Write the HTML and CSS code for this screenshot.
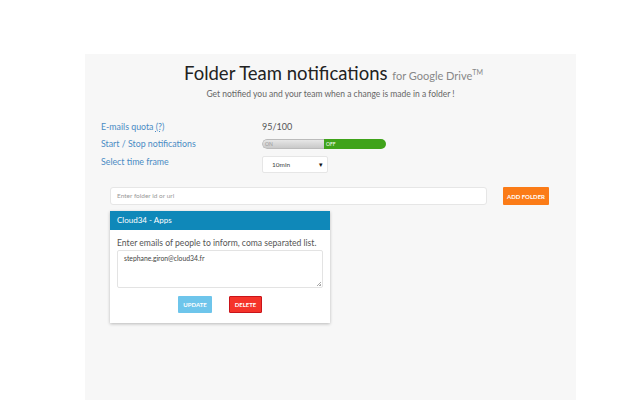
FILE: index.html
```html
<!DOCTYPE html>
<html lang="en">
<head>
    <meta charset="UTF-8">
    <title>Folder Team notifications</title>
    <link rel="stylesheet" href="styles.css">
</head>
<body>
    <div class="wrapper">
        <h1>Folder Team notifications <small>for Google Drive<sup>TM</sup></small></h1>
        <p class="sub">Get notified you and your team when a change is made in a folder !</p>
        <div class="settings">
            <div class="row">
                <span class="label">E-mails quota <u>(?)</u></span>
                <span class="value">95/100</span>
            </div>
            <div class="row">
                <span class="label">Start / Stop notifications</span>
                <div class="toggle"><span class="on">ON</span><span class="off">OFF</span></div>
            </div>
            <div class="row">
                <span class="label">Select time frame</span>
                <div class="select"><span>10min</span><span class="arrow">&#9662;</span></div>
            </div>
        </div>
        <div class="addRow">
            <div class="folderInput">Enter folder id or url</div>
            <button class="btn add">ADD FOLDER</button>
        </div>
        <div class="card">
            <div class="cardHead">Cloud34 - Apps</div>
            <div class="cardBody">
                <p class="hint">Enter emails of people to inform, coma separated list.</p>
                <div class="emails">stephane.giron@cloud34.fr<span class="grip"></span></div>
                <div class="actions">
                    <button class="btn update">UPDATE</button>
                    <button class="btn delete">DELETE</button>
                </div>
            </div>
        </div>
    </div>
</body>
</html>
```

FILE: styles.css
```css
body {
    margin: 0;
    background-color: white;
    font-family: Lato, "Open Sans", sans-serif;
    color: #555;
}
.wrapper {
    width: 491px;
    height: 346px;
    margin: 54px 0 0 85px;
    background-color: #f7f7f7;
    box-sizing: border-box;
    padding-top: 6px;
}
h1 {
    margin: 0;
    text-align: center;
    font-weight: 400;
    font-size: 18.5px;
    color: #222;
    line-height: 24px;
    padding-left: 6px;
}
h1 small {
    font-size: 11px;
    color: #888;
}
h1 sup {
    font-size: 7px;
}
.sub {
    margin: 1px 0 0;
    text-align: center;
    font-size: 8.5px;
    color: #666;
}
.settings {
    margin: 19px 0 0 16px;
}
.row {
    display: flex;
    align-items: center;
    height: 17.5px;
}
.label {
    width: 161px;
    font-size: 8.8px;
    color: #4a8bc4;
}
.label u {
    text-decoration: underline dotted;
}
.value {
    font-size: 9px;
    color: #555;
}
.toggle {
    display: flex;
    width: 124px;
    height: 10px;
    border-radius: 5px;
    overflow: hidden;
    font-size: 5px;
    line-height: 10px;
}
.toggle .on {
    width: 62px;
    padding-left: 2px;
    background: linear-gradient(#e6e6e6, #c9c9c9);
    color: #999;
    border: 1px solid #bbb;
    border-right: none;
    border-radius: 5px 0 0 5px;
    box-sizing: border-box;
    line-height: 8px;
}
.toggle .off {
    flex: 1;
    padding-left: 2px;
    background-color: #3fa31a;
    color: white;
}
.select {
    display: flex;
    justify-content: space-between;
    align-items: center;
    width: 66px;
    height: 17px;
    margin-top: 6px;
    padding: 0 4px 0 9px;
    box-sizing: border-box;
    background: white;
    border: 1px solid #e6e6e6;
    border-radius: 2px;
    font-size: 6.5px;
    color: #444;
}
.select .arrow {
    font-size: 7px;
    color: #111;
}
.addRow {
    display: flex;
    align-items: center;
    margin: 17px 0 0 25px;
}
.folderInput {
    width: 377px;
    height: 18px;
    box-sizing: border-box;
    background: white;
    border: 1px solid #e6e6e6;
    border-radius: 3px;
    font-size: 6.5px;
    color: #999;
    line-height: 16px;
    padding-left: 6px;
}
.btn {
    border: none;
    font-family: Lato, "Open Sans", sans-serif;
    font-weight: 700;
    font-size: 6px;
    color: white;
    padding: 0;
    border-radius: 1px;
}
.add {
    width: 46px;
    height: 18px;
    margin-left: 16px;
    background-color: #fb7b17;
}
.card {
    width: 220px;
    margin: 6px 0 0 25px;
    background: white;
    box-shadow: 0 1px 3px rgba(0, 0, 0, 0.25);
}
.cardHead {
    height: 19px;
    background-color: #0f88b9;
    color: white;
    font-size: 8px;
    line-height: 18px;
    padding-left: 7px;
}
.cardBody {
    padding: 8px 7px 10px;
}
.hint {
    margin: 0;
    font-size: 8.6px;
    color: #555;
    white-space: nowrap;
}
.emails {
    position: relative;
    height: 38px;
    margin-top: 2px;
    box-sizing: border-box;
    border: 1px solid #e3e3e3;
    border-radius: 2px;
    padding: 3px 6px;
    font-size: 6.8px;
    color: #444;
}
.grip {
    position: absolute;
    right: 1px;
    bottom: 1px;
    width: 4px;
    height: 4px;
    background: linear-gradient(135deg, transparent 45%, #aaa 45%, #aaa 55%, transparent 55%, transparent 75%, #aaa 75%);
}
.actions {
    display: flex;
    justify-content: center;
    gap: 17px;
    margin-top: 8px;
}
.update {
    width: 34px;
    height: 17px;
    background-color: #6ec5eb;
}
.delete {
    width: 33px;
    height: 17px;
    background-color: #f5332a;
    border: 1px solid #c9141a;
}
```
